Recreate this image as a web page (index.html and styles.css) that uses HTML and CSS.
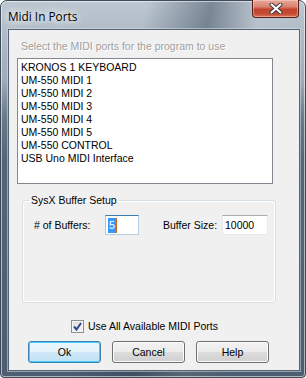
FILE: index.html
```html
<!DOCTYPE html>
<html>
<head>
<meta charset="utf-8">
<link rel="stylesheet" href="styles.css">
</head>
<body>
<div class="window">
  <div class="titlebar">
    <span class="title">Midi In Ports</span>
    <div class="close">
      <svg width="14" height="11" viewBox="0 0 14 11">
        <path d="M2.5 1.5 L11.5 9.5 M11.5 1.5 L2.5 9.5" stroke="#3a3a3a" stroke-width="4" stroke-linecap="round" fill="none"/>
        <path d="M2.5 1.5 L11.5 9.5 M11.5 1.5 L2.5 9.5" stroke="#ffffff" stroke-width="2" stroke-linecap="round" fill="none"/>
      </svg>
    </div>
  </div>
  <div class="client">
    <div class="prompt">Select the MIDI ports for the program to use</div>
    <ul class="list">
      <li>KRONOS 1 KEYBOARD</li>
      <li>UM-550 MIDI 1</li>
      <li>UM-550 MIDI 2</li>
      <li>UM-550 MIDI 3</li>
      <li>UM-550 MIDI 4</li>
      <li>UM-550 MIDI 5</li>
      <li>UM-550 CONTROL</li>
      <li>USB Uno MIDI Interface</li>
    </ul>
    <fieldset class="group">
      <legend class="legend">SysX Buffer Setup</legend>
      <div class="row">
        <span class="lbl lbl-count"># of Buffers:</span>
        <div class="field field-focus field-count"><span class="sel">5</span><span class="caret"></span></div>
        <span class="lbl lbl-size">Buffer Size:</span>
        <div class="field field-size">10000</div>
      </div>
    </fieldset>
    <div class="check">
      <span class="box">
        <svg width="9" height="9" viewBox="0 0 9 9"><path d="M1 4.5 L3.5 7.5 L8 1" stroke="#2b4a8e" stroke-width="2" fill="none"/></svg>
      </span>
      <span class="check-label">Use All Available MIDI Ports</span>
    </div>
    <div class="buttons">
      <div class="btn btn-default">Ok</div>
      <div class="btn">Cancel</div>
      <div class="btn">Help</div>
    </div>
  </div>
</div>
</body>
</html>
```
FILE: styles.css
```css
html, body {
  margin: 0;
  padding: 0;
  background: #ffffff;
}
.window {
  width: 306px;
  height: 378px;
  box-sizing: border-box;
  padding: 0 7px 7px 7px;
  border-radius: 7px 7px 4px 4px;
  border: 1px solid #3d4a58;
  box-shadow: inset 0 0 0 1px rgba(255,255,255,0.55);
  background:
    linear-gradient(102deg, rgba(255,255,255,0) 38%, rgba(45,60,78,0.45) 55%, rgba(255,255,255,0.05) 68%, rgba(255,255,255,0) 80%),
    linear-gradient(to bottom, #bcc7d1 0, #b1bdc8 28px, #9eabb8 80px, #6b7b8b 115px, #54657a 160px, #4d5e70 378px);
  font-family: "Liberation Sans", Arial, sans-serif;
  font-size: 10.5px;
  color: #000;
}
.titlebar {
  height: 28px;
  display: flex;
  justify-content: space-between;
  align-items: flex-start;
  margin-right: -1px;
}
.title {
  font-family: "Open Sans", "Noto Sans", sans-serif;
  font-size: 11.8px;
  line-height: 16px;
  margin-top: 7px;
  color: #000;
  text-shadow: 0 0 6px #fff, 0 0 10px #fff, 0 0 12px rgba(255,255,255,0.9);
}
.close {
  width: 47px;
  height: 18px;
  margin-top: -1px;
  box-sizing: border-box;
  border: 1px solid #5a1d16;
  border-top: none;
  border-radius: 0 0 4px 4px;
  background: linear-gradient(to bottom, #e9a99a 0%, #d9816f 40%, #c2432c 55%, #c54a31 80%, #d97359 100%);
  box-shadow: inset 0 0 0 1px rgba(255,220,210,0.45);
  display: flex;
  align-items: center;
  justify-content: center;
}
.close svg {
  display: block;
}
.client {
  width: 292px;
  height: 342px;
  box-sizing: border-box;
  border: 1px solid #56626f;
  background: #f0f0f0;
  padding-top: 10px;
  box-shadow: 0 0 0 1px rgba(220,228,236,0.5);
}
.prompt {
  margin-left: 12px;
  line-height: 13px;
  height: 13px;
  color: #a0a0a0;
  text-shadow: 1px 1px 0 #ffffff;
  white-space: nowrap;
}
.list {
  list-style: none;
  margin: 5px 0 0 8px;
  padding: 2px 0 0 3px;
  width: 256px;
  height: 126px;
  box-sizing: border-box;
  border: 1px solid #828790;
  background: #ffffff;
}
.list li {
  line-height: 13px;
  height: 13px;
  white-space: nowrap;
}
.group {
  margin: 10px 0 0 13px;
  padding: 8px 0 0 0;
  width: 254px;
  height: 109px;
  box-sizing: border-box;
  border: 1px solid #d5dfe5;
  border-radius: 3px;
  box-shadow: inset 0 0 0 1px #ffffff;
  min-inline-size: 0;
}
.legend {
  padding: 0 2px;
  margin-left: 6px;
  line-height: 13px;
}
.row {
  display: flex;
  align-items: center;
  height: 20px;
}
.lbl {
  line-height: 13px;
  white-space: nowrap;
}
.lbl-count {
  margin-left: 11px;
  width: 71px;
}
.lbl-size {
  margin-left: 24px;
  width: 59px;
}
.field {
  height: 20px;
  box-sizing: border-box;
  border: 1px solid #e3e9ef;
  border-top-color: #abadb3;
  background: #fff;
  padding: 0 0 0 2px;
  line-height: 18px;
  display: flex;
  align-items: center;
}
.field-focus {
  border-color: #b5cfe7;
  border-top-color: #3d7bad;
  border-left-color: #a4c9e3;
}
.field-count {
  width: 34px;
}
.field-size {
  width: 46px;
}
.sel {
  background: #3399ff;
  color: #fff;
  line-height: 15px;
  height: 15px;
  padding: 0 1px;
}
.caret {
  width: 1px;
  height: 15px;
  background: #cc6a1a;
}
.check {
  margin: 17px 0 0 62px;
  display: flex;
  align-items: center;
  height: 13px;
}
.box {
  width: 13px;
  height: 13px;
  box-sizing: border-box;
  border: 1px solid #8e8f8f;
  background: linear-gradient(135deg, #dcdcdc 0%, #f6f6f6 100%);
  box-shadow: inset 0 0 0 1px #f4f4f4;
  display: flex;
  align-items: center;
  justify-content: center;
}
.box svg {
  display: block;
}
.check-label {
  margin-left: 4px;
  line-height: 13px;
  white-space: nowrap;
}
.buttons {
  margin: 8px 0 0 19px;
  display: flex;
  gap: 11px;
}
.btn {
  width: 73px;
  height: 22px;
  box-sizing: border-box;
  border: 1px solid #707070;
  border-radius: 3px;
  background: linear-gradient(to bottom, #f2f2f2 0%, #ebebeb 50%, #dddddd 50%, #cfcfcf 100%);
  box-shadow: inset 0 0 0 1px #fcfcfc;
  display: flex;
  align-items: center;
  justify-content: center;
  line-height: 13px;
}
.btn-default {
  border-color: #3c7fb1;
  background: linear-gradient(to bottom, #eaf6fd 0%, #e2f2fb 50%, #cfe9f8 50%, #c0e2f5 100%);
  box-shadow: inset 0 0 0 1px #48cff6;
}
```
